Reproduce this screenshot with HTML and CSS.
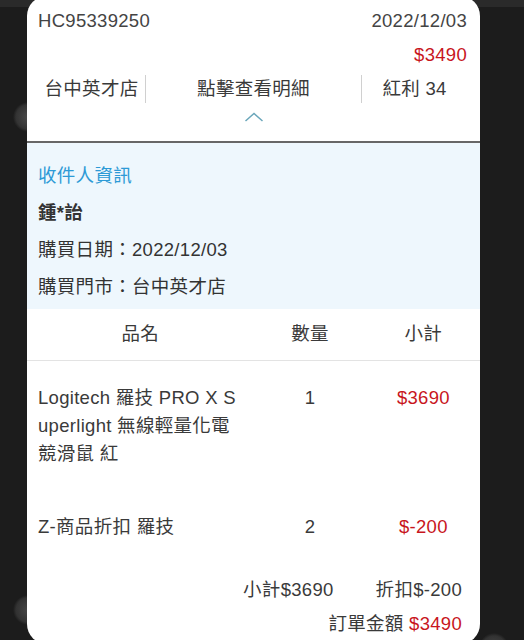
FILE: index.html
```html
<html>
  <head>
    <meta charset="UTF-8" />
    <link rel="stylesheet" href="styles.css">
  </head>
  <body>
    <div class="order">
      <div class="orderHead">
        <div class="headLine">
          <span>HC95339250</span>
          <span>2022/12/03</span>
        </div>
        <div class="headLine total">$3490</div>
        <div class="navRow">
          <div class="navCell first">台中英才店</div>
          <div class="navCell middle">點擊查看明細</div>
          <div class="navCell last">紅利 34</div>
        </div>
        <div class="toggle">
          <svg width="20" height="10" viewBox="0 0 20 10"><path d="M1.5 9 L10 1.5 L18.5 9" fill="none" stroke="#6aa6ba" stroke-width="1.5"/></svg>
        </div>
      </div>

      <div class="receiver">
        <div class="receiverTitle">收件人資訊</div>
        <div class="receiverName">鍾*詒</div>
        <div>購買日期：2022/12/03</div>
        <div>購買門市：台中英才店</div>
      </div>

      <div class="items">
        <div class="itemsHead">
          <div>品名</div>
          <div>數量</div>
          <div>小計</div>
        </div>
        <div class="itemRow">
          <div class="itemName">Logitech 羅技 PRO X Superlight 無線輕量化電競滑鼠 紅</div>
          <div>1</div>
          <div class="price">$3690</div>
        </div>
        <div class="itemRow">
          <div class="itemName">Z-商品折扣 羅技</div>
          <div>2</div>
          <div class="price">$-200</div>
        </div>
      </div>

      <div class="sums">
        <div class="sumLine">
          <span>小計$3690</span>
          <span>折扣$-200</span>
        </div>
        <div class="sumLine">
          <span>訂單金額 <span class="price">$3490</span></span>
        </div>
      </div>
    </div>
  </body>
</html>
```

FILE: styles.css
```css
body {
  margin: 0;
  height: 640px;
  overflow: hidden;
  font-family: 'Liberation Sans', 'Noto Sans CJK TC', sans-serif;
  font-size: 18.5px;
  letter-spacing: 0.3px;
  color: #3a3a3a;
  background:
    radial-gradient(circle at 28px 117px, #4a4a4a 0, #333 12px, transparent 15px),
    radial-gradient(circle at 28px 610px, #464646 0, #323232 12px, transparent 15px),
    radial-gradient(circle at 494px 648px, #464646 0, #323232 12px, transparent 15px),
    linear-gradient(#2a2a2a 0, #2a2a2a 7px, #1c1c1c 7px);
}
.order {
  margin: -4px 0 0 27px;
  width: 453px;
  height: 648px;
  background: #fff;
  border-radius: 20px;
  overflow: hidden;
}
.orderHead {
  padding: 8px 13px 0 11px;
  border-bottom: 2px solid #676767;
}
.headLine {
  display: flex;
  justify-content: space-between;
  line-height: 34px;
  color: #444;
}
.total {
  justify-content: flex-end;
  color: #c8161d;
}
.navRow {
  display: flex;
  padding: 3px 0;
}
.navCell {
  line-height: 28px;
  text-align: center;
}
.first {
  width: 107px;
  border-right: 1px solid #d0d0d0;
}
.middle {
  width: 215px;
  border-right: 1px solid #d0d0d0;
}
.last {
  flex: 1;
}
.toggle {
  height: 35px;
  padding-top: 6px;
  box-sizing: border-box;
  text-align: center;
  padding-left: 2px;
}
.receiver {
  background: #eef7fd;
  padding: 14px 11px 4px;
  line-height: 37px;
  color: #333;
}
.receiverTitle {
  color: #2d9ad6;
}
.receiverName {
  font-weight: bold;
}
.itemsHead, .itemRow {
  display: grid;
  grid-template-columns: 50% 25% 25%;
  text-align: center;
  line-height: 28px;
}
.itemsHead {
  padding: 11px 0 12px;
  border-bottom: 1px solid #e3e3e3;
}
.itemRow {
  padding: 23px 0 22px;
}
.itemName {
  text-align: left;
  padding-left: 11px;
  padding-right: 13px;
  word-break: break-all;
}
.price {
  color: #c8161d;
}
.sums {
  padding: 10px 18px 0 0;
}
.sumLine {
  display: flex;
  justify-content: flex-end;
  gap: 42px;
  line-height: 34px;
}
```
